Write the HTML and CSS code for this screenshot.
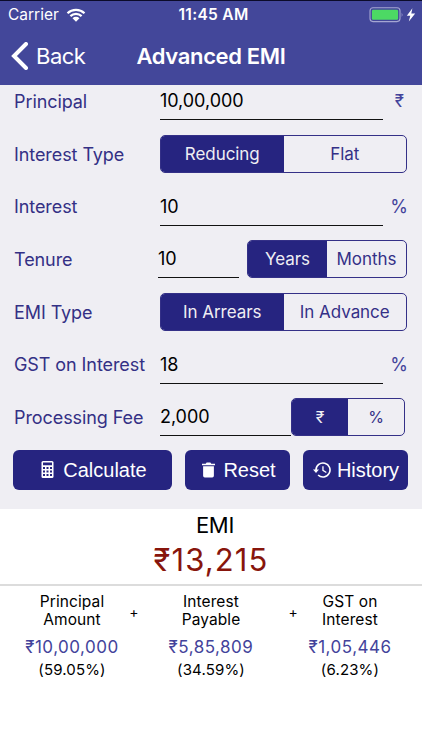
FILE: index.html
```html
<!DOCTYPE html>
<html lang="en">
<head>
    <meta charset="UTF-8">
    <meta name="viewport" content="width=device-width, initial-scale=1.0">
    <title>Advanced EMI</title>
    <link rel="stylesheet" href="styles.css">
</head>
<body>

<header class="header">
    <div class="status-bar">
        <div class="carrier">
            <span class="carrier-name">Carrier</span>
            <svg class="wifi" width="20" height="14" viewBox="0 0 20 14">
                <path d="M1.5 5.2a12.3 12.3 0 0 1 17 0M4.4 8.1a8.2 8.2 0 0 1 11.2 0" fill="none" stroke="#fff" stroke-width="2.2"/>
                <path d="M6.5 10.2a5 5 0 0 1 7 0L10 13.7z" fill="#fff"/>
            </svg>
        </div>
        <span class="time">11:45 AM</span>
        <div class="battery">
            <svg width="48" height="16" viewBox="0 0 48 16">
                <rect x="1" y="0.8" width="30" height="13.8" rx="3" fill="none" stroke="#a5a6d2" stroke-width="1.1"/>
                <rect x="2.9" y="2.7" width="26.2" height="10" rx="1.3" fill="#4cd964"/>
                <path d="M32.7 5.5q1.6 2.3 0 4.6z" fill="#a5a6d2"/>
                <path d="M43.4 1.2L37.8 8.8h3.5L39.8 14.4l6.4-8h-3.9z" fill="#fff"/>
            </svg>
        </div>
    </div>
    <div class="nav-bar">
        <div class="back">
            <svg width="18" height="28" viewBox="0 0 18 28">
                <path d="M15 2L3 14l12 12" fill="none" stroke="#fff" stroke-width="4" stroke-linecap="round" stroke-linejoin="miter"/>
            </svg>
            <span class="back-text">Back</span>
        </div>
        <h1 class="title">Advanced EMI</h1>
    </div>
</header>

<main class="form">
    <div class="row">
        <label class="label">Principal</label>
        <div class="field">10,00,000</div>
        <span class="unit rupee">₹</span>
    </div>
    <div class="row">
        <label class="label">Interest Type</label>
        <div class="segment">
            <button class="option active">Reducing</button>
            <button class="option">Flat</button>
        </div>
    </div>
    <div class="row">
        <label class="label">Interest</label>
        <div class="field">10</div>
        <span class="unit">%</span>
    </div>
    <div class="row">
        <label class="label">Tenure</label>
        <div class="field field-tenure">10</div>
        <div class="segment segment-tenure">
            <button class="option active">Years</button>
            <button class="option">Months</button>
        </div>
    </div>
    <div class="row">
        <label class="label">EMI Type</label>
        <div class="segment">
            <button class="option active">In Arrears</button>
            <button class="option">In Advance</button>
        </div>
    </div>
    <div class="row">
        <label class="label">GST on Interest</label>
        <div class="field">18</div>
        <span class="unit">%</span>
    </div>
    <div class="row">
        <label class="label">Processing Fee</label>
        <div class="field field-fee">2,000</div>
        <div class="segment segment-fee">
            <button class="option active">₹</button>
            <button class="option">%</button>
        </div>
    </div>

    <div class="buttons">
        <button class="button calculate">
            <svg width="13" height="17" viewBox="0 0 13 17">
                <rect x="0.5" y="0" width="12" height="17" rx="1.5" fill="#fff"/>
                <path d="M2 1.6h9v2.6H2zM2 6h2v2H2zM5.5 6h2v2h-2zM9 6h2v2H9zM2 9.5h2v2H2zM5.5 9.5h2v2h-2zM9 9.5h2v2H9zM2 13h2v2H2zM5.5 13h2v2h-2zM9 13h2v2H9z" fill="#262480"/>
            </svg>
            <span class="button-text">Calculate</span>
        </button>
        <button class="button reset">
            <svg width="13" height="16" viewBox="0 0 14 16">
                <path d="M0 1.2h4L5 0h4l1 1.2h4v1.6H0zM1.2 4h11.6v10.2q0 1.8-1.8 1.8H3q-1.8 0-1.8-1.8z" fill="#fff"/>
            </svg>
            <span class="button-text">Reset</span>
        </button>
        <button class="button history">
            <svg width="18" height="16" viewBox="0 0 18 16">
                <path d="M3 8a7 7 0 1 1 2.1 5" fill="none" stroke="#fff" stroke-width="1.6"/>
                <path d="M0 7.6h6L3 11zM9.3 4.2h1.3v3.9l3.1 1.9-.7 1.1-3.7-2.3z" fill="#fff"/>
            </svg>
            <span class="button-text">History</span>
        </button>
    </div>
</main>

<section class="result">
    <h2 class="result-title">EMI</h2>
    <div class="result-amount">₹13,215</div>
</section>

<section class="breakdown">
    <div class="part">
        <div class="part-name">Principal<br>Amount</div>
        <div class="part-amount">₹10,00,000</div>
        <div class="part-percent">(59.05%)</div>
    </div>
    <span class="plus plus-left">+</span>
    <div class="part">
        <div class="part-name">Interest<br>Payable</div>
        <div class="part-amount">₹5,85,809</div>
        <div class="part-percent">(34.59%)</div>
    </div>
    <span class="plus plus-right">+</span>
    <div class="part">
        <div class="part-name">GST on<br>Interest</div>
        <div class="part-amount">₹1,05,446</div>
        <div class="part-percent">(6.23%)</div>
    </div>
</section>

</body>
</html>
```

FILE: styles.css
```css
* {
    box-sizing: border-box;
}
body {
    margin: 0;
    height: 750px;
    overflow: hidden;
    background-color: #fff;
    font-family: Inter, "Liberation Sans", sans-serif;
    color: #000;
}
button {
    font-family: inherit;
    border: none;
    padding: 0;
    cursor: pointer;
}
svg {
    display: block;
    flex-shrink: 0;
}
.header {
    position: relative;
    z-index: 1;
    height: 85px;
    background-color: #43479a;
    color: #fff;
    border-top: 1px solid #0b0b2a;
}
.status-bar {
    display: grid;
    grid-template-columns: 1fr auto 1fr;
    align-items: center;
    height: 27px;
    padding: 0 5px 0 8px;
}
.carrier {
    display: flex;
    align-items: center;
    gap: 7px;
    font-size: 15.5px;
}
.time {
    padding-left: 2px;
    font-size: 15.5px;
    font-weight: 600;
    letter-spacing: 0.3px;
}
.battery {
    display: flex;
    justify-content: flex-end;
}
.nav-bar {
    display: grid;
    grid-template-columns: 1fr auto 1fr;
    align-items: center;
    height: 56px;
    padding: 0 11px;
}
.back {
    display: flex;
    align-items: center;
    gap: 7px;
    font-size: 22px;
    letter-spacing: -0.5px;
}
.title {
    margin: 0;
    font-size: 22px;
    font-weight: 600;
    letter-spacing: -0.35px;
}
.form {
    height: 434px;
    margin-top: -10px;
    padding: 0 13px;
    background-color: #efeef3;
}
.row {
    display: flex;
    align-items: center;
    height: 52.7px;
}
.label {
    width: 147px;
    padding-left: 1px;
    font-size: 18px;
    letter-spacing: -0.08px;
    color: #343085;
    white-space: nowrap;
}
.field {
    width: 223px;
    height: 38px;
    line-height: 38px;
    border-bottom: 1px solid #111;
    font-size: 18px;
    letter-spacing: -0.05px;
}
.field-tenure {
    width: 81px;
    margin-left: -2px;
}
.field-fee {
    width: 131px;
}
.unit {
    width: 25px;
    text-align: right;
    font-size: 18px;
    color: #43439b;
}
.rupee {
    padding-right: 4px;
    font-size: 17px;
}
.segment {
    display: flex;
    width: 247px;
    height: 38px;
    margin-top: -1px;
    border: 1px solid #343087;
    border-radius: 5px;
    overflow: hidden;
}
.segment-tenure {
    width: 160px;
    margin-left: 8px;
}
.segment-fee {
    width: 114px;
}
.option {
    flex: 1;
    background-color: transparent;
    color: #343087;
    font-size: 17px;
    letter-spacing: -0.05px;
}
.segment-fee .option {
    font-size: 16px;
}
.active {
    background-color: #262480;
    color: #efeef3;
}
.buttons {
    display: flex;
    gap: 13px;
    padding-top: 6px;
}
.button {
    display: flex;
    align-items: center;
    justify-content: center;
    gap: 9px;
    width: 105px;
    height: 40px;
    border-radius: 6px;
    background-color: #262480;
    color: #fff;
    font-family: "Liberation Sans", Arial, sans-serif;
    font-size: 20px;
}
.button-text {
    padding-top: 2px;
}
.calculate {
    width: 159px;
    padding-left: 3px;
}
.reset {
    gap: 8px;
    padding-left: 3px;
}
.history {
    gap: 6px;
    padding-left: 1px;
}
.result {
    height: 77px;
    border-bottom: 2px solid #dcdcdc;
    text-align: center;
}
.result-title {
    margin: 0;
    padding: 3px 0 0 8px;
    font-size: 22px;
    font-weight: 400;
    line-height: 26px;
    letter-spacing: -0.3px;
}
.result-amount {
    margin-top: 4px;
    font-size: 31px;
    letter-spacing: 1.1px;
    line-height: 36px;
    color: #87150c;
}
.breakdown {
    display: flex;
    justify-content: center;
    padding-top: 7px;
    text-align: center;
}
.part {
    width: 105px;
}
.part-name {
    font-size: 15.5px;
    line-height: 18px;
    letter-spacing: 0.1px;
}
.part-amount {
    margin-top: 7px;
    font-size: 17px;
    letter-spacing: 0.5px;
    line-height: 22px;
    color: #43439b;
}
.part-percent {
    margin-top: 2px;
    font-size: 15px;
    letter-spacing: 0.15px;
    line-height: 20px;
}
.plus {
    width: 34px;
    padding-top: 9px;
    font-size: 14px;
    line-height: 20px;
}
.plus-left {
    padding-right: 15px;
}
.plus-right {
    padding-left: 25px;
}
```
